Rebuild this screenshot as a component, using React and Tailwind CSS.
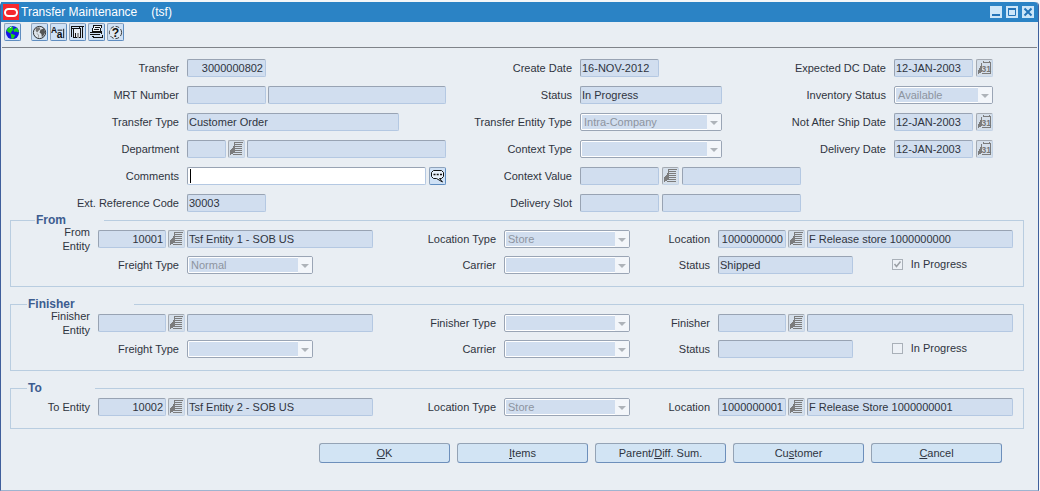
import React from "react";

const TONES = {
  shaded: "bg-[#d1deef] text-[#2f3440] border-t-[#98a3b3] border-l-[#98a3b3] border-r-[#b4c8e2] border-b-[#b4c8e2]",
  open: "bg-white text-black border-t-[#98a3b3] border-l-[#98a3b3] border-r-[#b4c8e2] border-b-[#b4c8e2]",
};

function Field({ id, label, value = "", width = "flex-1", align = "text-left", tone = "shaded" }) {
  return (
    <input
      id={id}
      aria-label={label}
      defaultValue={value}
      readOnly={tone === "shaded"}
      className={`h-[18px] min-w-0 rounded-[2px] border pl-px pr-[2px] outline-none ${width} ${align} ${TONES[tone]}`}
    />
  );
}

function Picker({ id, value = "", width = "w-[126px]" }) {
  return (
    <div className={`relative h-[18px] rounded-[2px] border border-[#9aa5b5] bg-white p-px ${width}`}>
      <select
        id={id}
        disabled
        defaultValue={value}
        className="block h-full w-full appearance-none bg-[#d1deef] pl-[2px] pr-4 leading-[14px] text-[#8d949f] opacity-100 outline-none"
      >
        <option value={value}>{value}</option>
      </select>
      <span className="pointer-events-none absolute inset-y-0 right-0 flex w-[14px] items-center justify-center rounded-r-[1px] bg-[#f3f6fa]">
        <svg viewBox="0 0 8 4" className="mt-px h-1 w-2" fill="#aeb3b9">
          <path d="M0 0h8L4 4z" />
        </svg>
      </span>
    </div>
  );
}

function Caption({ htmlFor, children, className = "" }) {
  return (
    <label htmlFor={htmlFor} className={`flex h-[18px] items-center justify-end whitespace-nowrap text-right ${className}`}>
      {children}
    </label>
  );
}

function IconButton({ label, children, active = false }) {
  return (
    <button
      type="button"
      aria-label={label}
      className={`flex h-[18px] w-[17px] shrink-0 items-center justify-center rounded-[2px] border ${
        active
          ? "border-t-[#8fa3bb] border-l-[#8fa3bb] border-r-[#5f8dc0] border-b-[#5f8dc0] bg-[#cfe1f5]"
          : "border-t-[#a3a9b1] border-l-[#a3a9b1] border-r-[#c3d3e6] border-b-[#c3d3e6] bg-[#d5dfea]"
      }`}
    >
      {children}
    </button>
  );
}

function ListButton({ label }) {
  return (
    <IconButton label={label}>
      <svg viewBox="0 0 15 16" className="h-4 w-[15px]" fill="none" stroke="#7c7c7c" shapeRendering="crispEdges">
        <path d="M5 1.5h9M6 3.5h7M5 5.5h8M6 7.5h7M6 9.5h7M6 11.5h7M4 13.5h9" />
        <path d="M5.5 1v6" />
        <path d="M5 5v2h1v5H4v1H2v1H1V9h1V8h1V7h1V5z" fill="#7c7c7c" stroke="none" />
      </svg>
    </IconButton>
  );
}

function CalendarButton({ label }) {
  return (
    <IconButton label={label}>
      <svg viewBox="0 0 15 16" className="h-4 w-[15px]">
        <path d="M5.500 2.500h8M4.500 4V2.500M6.500 1v2M12.500 1v2M13.500 2v11M5 13.500h9" fill="none" stroke="#7c7c7c" shapeRendering="crispEdges" />
        <path d="M4 3v1h1v8H4v1H2v1H1v-4h1V8h1V6h1z" fill="#7c7c7c" shapeRendering="crispEdges" />
        <text x="4.500" y="11.500" fontSize="8.500" fontWeight="bold" fill="#777" fontFamily="Liberation Sans, sans-serif">31</text>
      </svg>
    </IconButton>
  );
}

function CommentIcon() {
  return (
    <svg viewBox="0 0 15 16" className="h-4 w-[15px]" fill="none" stroke="#111">
      <path d="M3.5 2.5h8l2 2v4l-2 2H9.5l3 3.500-6-3.500H3.5l-2-2v-4z" fill="#e9f1fa" />
      <path d="M3.5 6.5h2M6.7 6.5h2M10 6.5h2" strokeWidth="1.6" />
    </svg>
  );
}

function GlobeIcon() {
  return (
    <svg viewBox="0 0 16 16" className="h-[15px] w-[15px]">
      <circle cx="8" cy="8" r="7" fill="#1414e6" />
      <path d="M3 3.5 6 1.5l3 .5-1 2 1 1-2 2-1 2-2-1-2.500-2z" fill="#19d419" />
      <path d="M10 4l3-1 2 4-1 1-2-1-2 .5-1-2zM6 9l3 1 2 1-2 3.500-2 .5-.5-2.500z" fill="#19d419" />
      <path d="M5 3l2-1" stroke="#dff" />
    </svg>
  );
}

function WorldIcon() {
  return (
    <svg viewBox="0 0 16 16" className="h-[15px] w-[15px]">
      <circle cx="8" cy="8" r="6.500" fill="#dfe5ec" stroke="#222" />
      <path d="M4 3l4-.5 1 2-2 1.500L5.500 8 4 6.500z" fill="#777" />
      <path d="M9 5l4-1.500L14 8l-1.500 3-2 2L10 9.500 8 8z" fill="#555" />
      <path d="M5 9l2 1.500v3" stroke="#999" fill="none" />
    </svg>
  );
}

function TranslateIcon() {
  return (
    <svg viewBox="0 0 16 16" className="h-[15px] w-[15px]" fontFamily="Liberation Sans, sans-serif" fill="#111">
      <text x="0" y="8" fontSize="9" fontWeight="bold">A</text>
      <text x="6" y="14" fontSize="11" fontWeight="bold">a</text>
      <path d="M13.500 4v10M7 5.500h5" stroke="#111" fill="none" />
    </svg>
  );
}

function ReportIcon() {
  return (
    <svg viewBox="0 0 15 16" className="h-4 w-[15px]" fill="none" stroke="#111" shapeRendering="crispEdges">
      <path d="M1.500 13V2.500h8M1.500 4.500h2" />
      <path d="M3.500 4.500h7v9h-7z" fill="#e8edf3" />
      <path d="M7 9h2v5H7z" fill="#999" stroke="none" />
      <path d="M5.500 14V9M9.500 2v3M10 2.500h3.500M12.500 3v11" />
    </svg>
  );
}

function StackIcon() {
  return (
    <svg viewBox="0 0 15 16" className="h-4 w-[15px]" fill="none" stroke="#111" shapeRendering="crispEdges">
      <path d="M4.500 1.500h8l-1 6h-8z" fill="#eef2f6" />
      <path d="M6 3.500h5M5 5.500h5M1 8.500h11M1 10.500h10M12.500 7v3M4 13.500h9M13.500 11v3M3 12.500h2" />
    </svg>
  );
}

function HelpIcon() {
  return (
    <svg viewBox="0 0 16 16" className="h-[15px] w-[15px]">
      <circle cx="8" cy="8" r="6.500" fill="#dfe8f2" stroke="#333" strokeDasharray="4 2" />
      <text x="8" y="12.500" textAnchor="middle" fontSize="13" fontWeight="bold" fill="#111" fontFamily="Liberation Sans, sans-serif">?</text>
    </svg>
  );
}

const TOOLS = [
  ["Preferences", WorldIcon],
  ["Translate", TranslateIcon],
  ["Reports", ReportIcon],
  ["List of values", StackIcon],
  ["Help", HelpIcon],
];

function TitleBar() {
  const box = "flex size-3 items-center justify-center bg-[#cde6f8]";
  return (
    <header className="flex h-5 items-center rounded-tr-[4px] bg-[#2b83c5] pl-[2px] pr-1 text-white">
      <svg viewBox="0 0 16 16" className="size-4 shrink-0">
        <rect width="16" height="16" fill="#f5282d" />
        <rect x="2" y="5" width="12" height="7" rx="3.500" fill="none" stroke="#fff" strokeWidth="2" />
      </svg>
      <h1 className="ml-[2px] flex flex-1 gap-[14px] text-[12px]">
        <span>Transfer Maintenance</span>
        <span>(tsf)</span>
      </h1>
      <div className="flex gap-1">
        <button type="button" aria-label="Minimize" className={box}>
          <svg viewBox="0 0 12 12" className="size-3"><path d="M2 9h8" stroke="#2474b8" strokeWidth="2" /></svg>
        </button>
        <button type="button" aria-label="Maximize" className={box}>
          <svg viewBox="0 0 12 12" className="size-3" fill="none" stroke="#2474b8">
            <path d="M2.500 3.500h7v6h-7z" /><path d="M2 3h8" strokeWidth="2" />
          </svg>
        </button>
        <button type="button" aria-label="Close" className={box}>
          <svg viewBox="0 0 12 12" className="size-3"><path d="M2.500 2.500l7 7M9.500 2.500l-7 7" stroke="#2474b8" strokeWidth="2" /></svg>
        </button>
      </div>
    </header>
  );
}

function Toolbar() {
  return (
    <div className="mx-px flex h-[26px] items-start border-b border-[#7f8389] pl-[2px] pt-px">
      <div className="mr-[10px] flex">
        <IconButton label="Home" active><GlobeIcon /></IconButton>
      </div>
      <div className="flex gap-[2px]">
        {TOOLS.map(([name, Icon]) => (
          <IconButton key={name} label={name} active><Icon /></IconButton>
        ))}
      </div>
    </div>
  );
}

function Summary() {
  return (
    <section className="grid grid-cols-[minmax(0,178fr)_259px_minmax(0,118fr)_221px_minmax(0,77fr)_99px] gap-x-2 pr-[45px] pt-[11px]">
      <div className="flex flex-col gap-[9px]">
        <Caption htmlFor="transfer">Transfer</Caption>
        <Caption htmlFor="mrt">MRT Number</Caption>
        <Caption htmlFor="ttype">Transfer Type</Caption>
        <Caption htmlFor="dept">Department</Caption>
        <Caption htmlFor="comments">Comments</Caption>
        <Caption htmlFor="extref">Ext. Reference Code</Caption>
      </div>
      <div className="flex flex-col gap-[9px]">
        <div className="flex"><Field id="transfer" value="3000000802" width="w-[79px]" align="text-right" /></div>
        <div className="flex gap-[2px]">
          <Field id="mrt" width="w-[79px]" />
          <Field label="MRT description" />
        </div>
        <div className="flex"><Field id="ttype" value="Customer Order" width="w-[212px]" /></div>
        <div className="flex gap-[2px]">
          <Field id="dept" width="w-[39px]" />
          <ListButton label="Department list" />
          <Field label="Department name" />
        </div>
        <div className="flex gap-[3px]">
          <div className="relative flex flex-1">
            <Field id="comments" tone="open" />
            <span aria-hidden="true" className="absolute inset-y-[2px] left-[3px] w-px bg-black" />
          </div>
          <IconButton label="Edit comments" active><CommentIcon /></IconButton>
        </div>
        <div className="flex"><Field id="extref" value="30003" width="w-[79px]" /></div>
      </div>

      <div className="flex flex-col gap-[9px]">
        <Caption htmlFor="created">Create Date</Caption>
        <Caption htmlFor="status">Status</Caption>
        <Caption htmlFor="etype">Transfer Entity Type</Caption>
        <Caption htmlFor="ctype">Context Type</Caption>
        <Caption htmlFor="cvalue">Context Value</Caption>
        <Caption htmlFor="slot">Delivery Slot</Caption>
      </div>
      <div className="flex flex-col gap-[9px]">
        <div className="flex"><Field id="created" value="16-NOV-2012" width="w-[79px]" /></div>
        <div className="flex"><Field id="status" value="In Progress" width="w-[142px]" /></div>
        <Picker id="etype" value="Intra-Company" width="w-[142px]" />
        <Picker id="ctype" width="w-[142px]" />
        <div className="flex gap-[3px]">
          <Field id="cvalue" width="w-[79px]" />
          <ListButton label="Context value list" />
          <Field label="Context value description" />
        </div>
        <div className="flex gap-[3px]">
          <Field id="slot" width="w-[79px]" />
          <Field label="Delivery slot description" />
        </div>
      </div>

      <div className="flex flex-col gap-[9px]">
        <Caption htmlFor="dcdate">Expected DC Date</Caption>
        <Caption htmlFor="inv">Inventory Status</Caption>
        <Caption htmlFor="notafter">Not After Ship Date</Caption>
        <Caption htmlFor="delivery">Delivery Date</Caption>
      </div>
      <div className="flex flex-col gap-[9px]">
        <div className="flex gap-[3px]">
          <Field id="dcdate" value="12-JAN-2003" />
          <CalendarButton label="Choose expected DC date" />
        </div>
        <Picker id="inv" value="Available" width="w-full" />
        <div className="flex gap-[3px]">
          <Field id="notafter" value="12-JAN-2003" />
          <CalendarButton label="Choose not after ship date" />
        </div>
        <div className="flex gap-[3px]">
          <Field id="delivery" value="12-JAN-2003" />
          <CalendarButton label="Choose delivery date" />
        </div>
      </div>
    </section>
  );
}

function Party({ id, title, legend, entityLabel, entityWidth, entity, entityName, typeLabel, type, placeLabel, place, placeName, shipping }) {
  return (
    <fieldset className="min-w-0 border border-[#b9cde0]">
      <legend className={`h-3 pl-px text-[12px] font-bold leading-3 text-[#3d5c8f] ${legend}`}>{title}</legend>
      <div className="grid grid-cols-[79fr_275px_115fr_126px_72fr_295px] gap-x-2 gap-y-2 pb-3 pr-[10px] pt-1">
        <div className="flex h-[18px] items-center justify-end">
          <label htmlFor={`${id}-entity`} className={`text-right leading-[14px] ${entityWidth}`}>{entityLabel}</label>
        </div>
        <div className="flex gap-[2px]">
          <Field id={`${id}-entity`} value={entity} width="w-[68px]" align="text-right" />
          <ListButton label={`${title} entity list`} />
          <Field label={`${title} entity name`} value={entityName} />
        </div>
        <Caption htmlFor={`${id}-type`}>{typeLabel}</Caption>
        <Picker id={`${id}-type`} value={type} />
        <Caption htmlFor={`${id}-place`}>{placeLabel}</Caption>
        <div className="flex gap-[2px]">
          <Field id={`${id}-place`} value={place} width="w-[68px]" align="text-right" />
          <ListButton label={`${title} location list`} />
          <Field label={`${title} location name`} value={placeName} />
        </div>

        {shipping && (
          <>
            <div className="col-start-2 flex gap-2">
              <Caption htmlFor={`${id}-freight`} className="w-[81px]">Freight Type</Caption>
              <Picker id={`${id}-freight`} value={shipping.freight} />
            </div>
            <Caption htmlFor={`${id}-carrier`}>Carrier</Caption>
            <Picker id={`${id}-carrier`} />
            <Caption htmlFor={`${id}-status`}>Status</Caption>
            <div className="flex justify-between pr-[46px]">
              <Field id={`${id}-status`} value={shipping.status} width="w-[135px]" />
              <label className="flex h-4 items-center gap-2">
                <span className="relative flex">
                  <input
                    type="checkbox"
                    disabled
                    defaultChecked={shipping.inProgress}
                    className="peer size-[11px] appearance-none border border-[#a9b0b8] bg-[#edf1f6]"
                  />
                  <svg viewBox="0 0 11 11" className="pointer-events-none absolute inset-0 hidden size-[11px] peer-checked:block" fill="none" stroke="#9a9fa5" strokeWidth="1.500">
                    <path d="M2.500 5l2 2.500 4-5" />
                  </svg>
                </span>
                In Progress
              </label>
            </div>
          </>
        )}
      </div>
    </fieldset>
  );
}

const ACTIONS = [
  ["ok", <><u>O</u>K</>],
  ["items", <><u>I</u>tems</>],
  ["parent", <>Parent/<u>D</u>iff. Sum.</>],
  ["customer", <>Cu<u>s</u>tomer</>],
  ["cancel", <><u>C</u>ancel</>],
];

export default function App() {
  return (
    <div className="min-h-screen bg-[#f4f6f8] pr-px pt-[2px] font-['Liberation_Sans',Arial,sans-serif] text-[11px] leading-[13px] text-[#2f3440]">
      <main className="flex min-h-[calc(100vh-2px)] flex-col rounded-t-[4px] border-x border-b border-x-[#3f5f9c] border-b-[#9fb4d0] bg-[#e9eef3]">
        <TitleBar />
        <Toolbar />
        <Summary />
        <div className="mt-[2px] flex flex-col gap-[11px] pl-[9px] pr-[14px]">
          <Party
            id="from" title="From" legend="ml-[24px] w-[69px]" entityLabel="From Entity" entityWidth="w-10"
            entity="10001" entityName="Tsf Entity 1 - SOB US" typeLabel="Location Type" type="Store"
            placeLabel="Location" place="1000000000" placeName="F Release store 1000000000"
            shipping={{ freight: "Normal", status: "Shipped", inProgress: true }}
          />
          <Party
            id="finisher" title="Finisher" legend="ml-[16px] w-[107px]" entityLabel="Finisher Entity" entityWidth="w-10"
            typeLabel="Finisher Type" placeLabel="Finisher"
            shipping={{ freight: "", status: "", inProgress: false }}
          />
          <Party
            id="to" title="To" legend="ml-[16px] w-[68px]" entityLabel="To Entity" entityWidth="whitespace-nowrap"
            entity="10002" entityName="Tsf Entity 2 - SOB US" typeLabel="Location Type" type="Store"
            placeLabel="Location" place="1000000001" placeName="F Release Store 1000000001"
          />
        </div>
        <footer className="mt-[14px] flex justify-end gap-[7px] pr-9">
          {ACTIONS.map(([key, text]) => (
            <button
              key={key}
              type="button"
              className="h-5 w-[131px] rounded-[3px] border border-t-[#94a3b5] border-l-[#94a3b5] border-r-[#6d8fbb] border-b-[#6d8fbb] bg-[#d2e4f4] underline-offset-1"
            >
              {text}
            </button>
          ))}
        </footer>
      </main>
    </div>
  );
}
